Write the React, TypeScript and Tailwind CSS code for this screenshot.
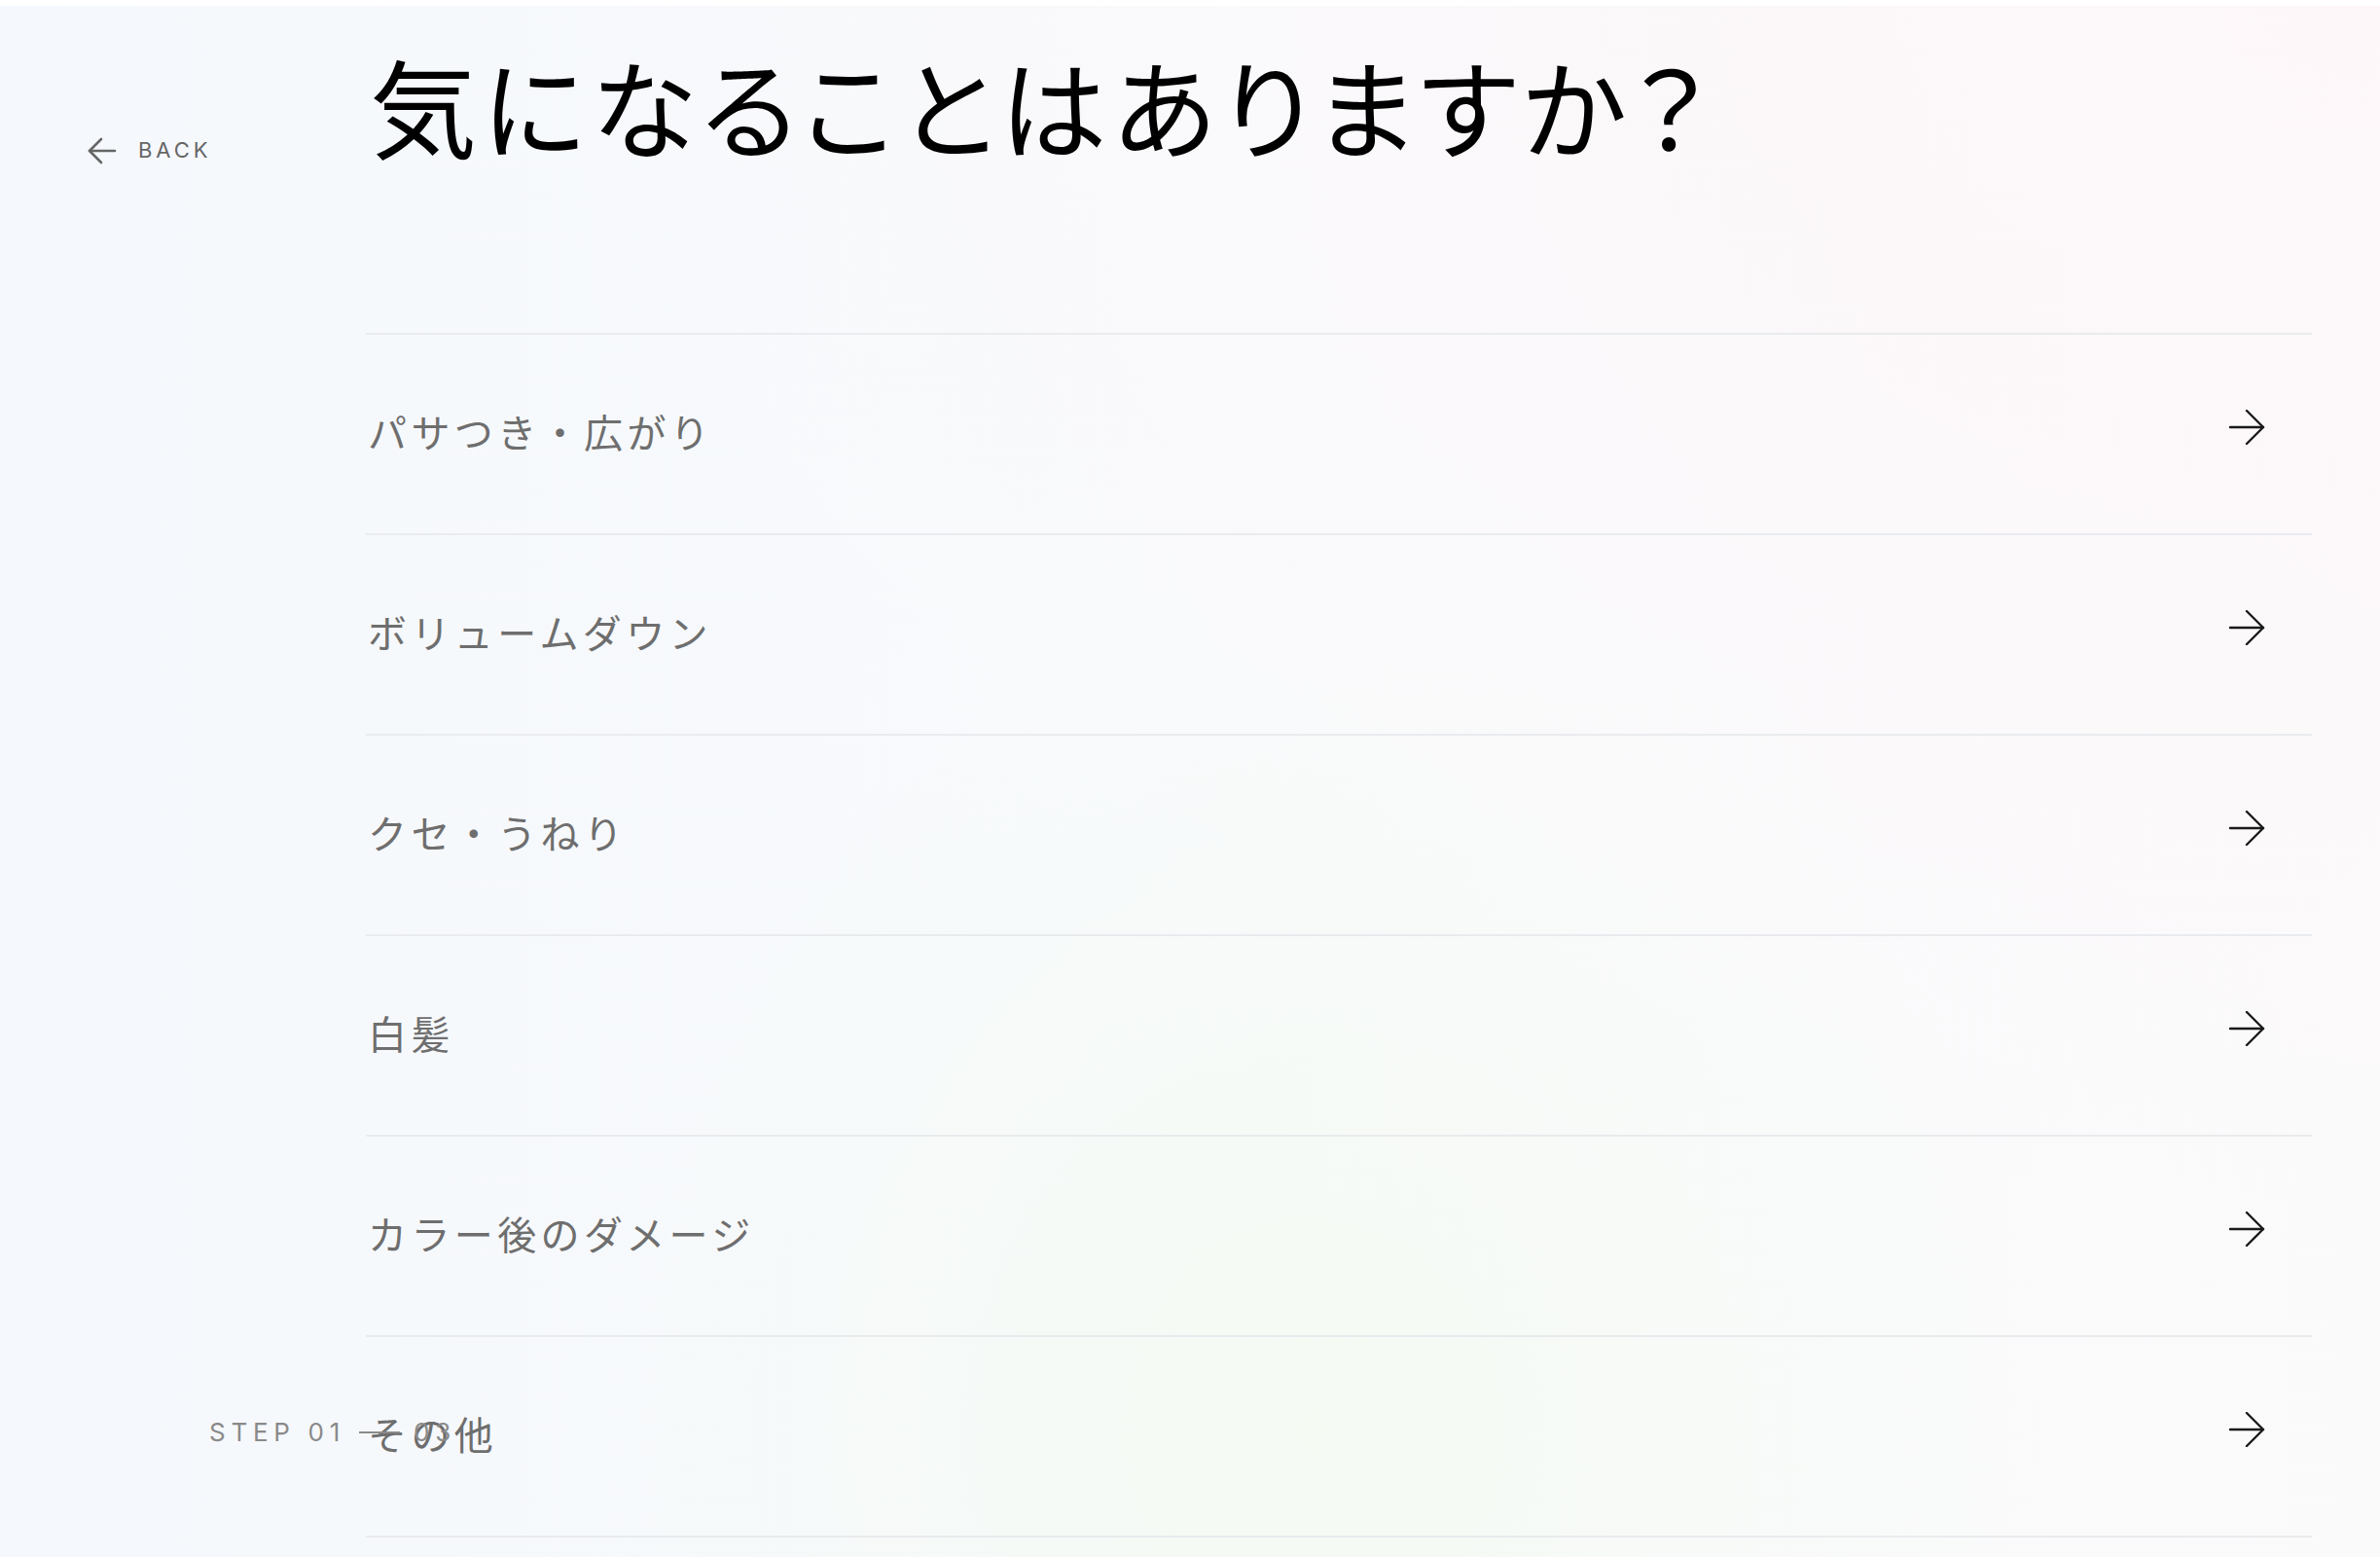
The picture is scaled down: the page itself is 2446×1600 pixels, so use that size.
import React from "react";

const items = [
  "パサつき・広がり",
  "ボリュームダウン",
  "クセ・うねり",
  "白髪",
  "カラー後のダメージ",
  "その他",
];

const ArrowRight = () => (
  <svg width="38" height="36" viewBox="0 0 38 36" fill="none" stroke="#1a1a1a" strokeWidth="2.4" strokeLinecap="round" strokeLinejoin="round">
    <path d="M2 18 H36" />
    <path d="M19 1 L36 18 L19 35" />
  </svg>
);

const ArrowLeft = () => (
  <svg width="30" height="28" viewBox="0 0 30 28" fill="none" stroke="#666" strokeWidth="2.6" strokeLinecap="round" strokeLinejoin="round">
    <path d="M28 14 H2" />
    <path d="M14 2 L2 14 L14 26" />
  </svg>
);

export default function App() {
  return (
    <div className="min-h-screen w-full bg-white pt-[6px] font-['Noto_Sans_CJK_JP',sans-serif]">
      <div className="relative h-[1594px] w-full overflow-hidden bg-[radial-gradient(ellipse_at_55%_92%,rgba(242,250,236,0.55)_0%,rgba(242,250,236,0)_40%),radial-gradient(ellipse_at_100%_0%,#fdf7f9_0%,rgba(253,247,249,0)_55%),linear-gradient(90deg,#f5f8fc_0%,#f8fafc_50%,#fbfafb_100%)]">
        <div className="flex w-full">
          <div className="w-[376px] shrink-0 pl-[90px] pt-[132px]">
            <button className="flex items-center gap-[22px] text-[#666]">
              <ArrowLeft />
              <span className="font-['Inter',sans-serif] text-[22px] tracking-[0.18em]">BACK</span>
            </button>
          </div>

          <div className="flex-1 pr-[70px]">
            <h1 className="pl-[4px] pt-[46px] text-[110px] leading-none tracking-[0.05em] text-black [font-feature-settings:'palt']">
              気になることはありますか？
            </h1>

            <ul className="mt-[180px] border-t-2 border-[#e9ebee]">
              {items.map((item) => (
                <li key={item} className="flex h-[206px] items-center justify-between border-b-2 border-[#e9ebee] pl-[2px] pr-[48px]">
                  <span className="-mt-[6px] text-[40px] tracking-[0.11em] text-[#6e6e6e]">{item}</span>
                  <span className="-mt-[14px]">
                    <ArrowRight />
                  </span>
                </li>
              ))}
            </ul>
          </div>
        </div>

        <div className="pointer-events-none absolute bottom-[109px] left-[215px] flex items-center font-['Inter',sans-serif] text-[26px] tracking-[0.22em] text-[#8a8a8a]">
          <span>STEP 01</span>
          <span className="ml-[14px] h-[2px] w-[42px] bg-[#8a8a8a]" />
          <span className="ml-[14px]">03</span>
        </div>
      </div>
    </div>
  );
}
